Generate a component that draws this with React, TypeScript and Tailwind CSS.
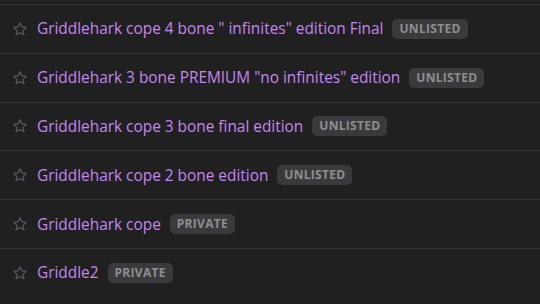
const rows = [
  { name: 'Griddlehark cope 4 bone " infinites" edition Final', badge: "UNLISTED" },
  { name: 'Griddlehark 3 bone PREMIUM "no infinites" edition', badge: "UNLISTED" },
  { name: "Griddlehark cope 3 bone final edition", badge: "UNLISTED" },
  { name: "Griddlehark cope 2 bone edition", badge: "UNLISTED" },
  { name: "Griddlehark cope", badge: "PRIVATE" },
  { name: "Griddle2", badge: "PRIVATE" },
];

const StarIcon = () => (
  <svg width="16" height="16" viewBox="0 0 24 24" fill="none" stroke="currentColor" strokeWidth="2" strokeLinejoin="round">
    <path d="M12 2.8l2.85 5.8 6.4.93-4.63 4.5 1.1 6.37L12 17.4l-5.72 3 1.1-6.37-4.63-4.5 6.4-.93z" />
  </svg>
);

export default function App() {
  return (
    <div className="w-[540px] h-[304px] bg-[#202020] overflow-hidden pt-[4px]" style={{ fontFamily: '"Open Sans", "Noto Sans", sans-serif' }}>
      {rows.map((r) => (
        <div key={r.name} className="h-[48.8px] border-t border-[#333333] flex items-center pl-[12px] gap-[9px]">
          <span className="text-[#5c5060]">
            <StarIcon />
          </span>
          <span className="text-[15.4px] text-[#c487f0]">{r.name}</span>
          <span className="h-[20px] px-[7px] rounded-[5px] bg-[#3a3a3c] text-[#8e8e90] text-[12px] font-bold flex items-center tracking-[0.3px]">
            {r.badge}
          </span>
        </div>
      ))}
    </div>
  );
}
